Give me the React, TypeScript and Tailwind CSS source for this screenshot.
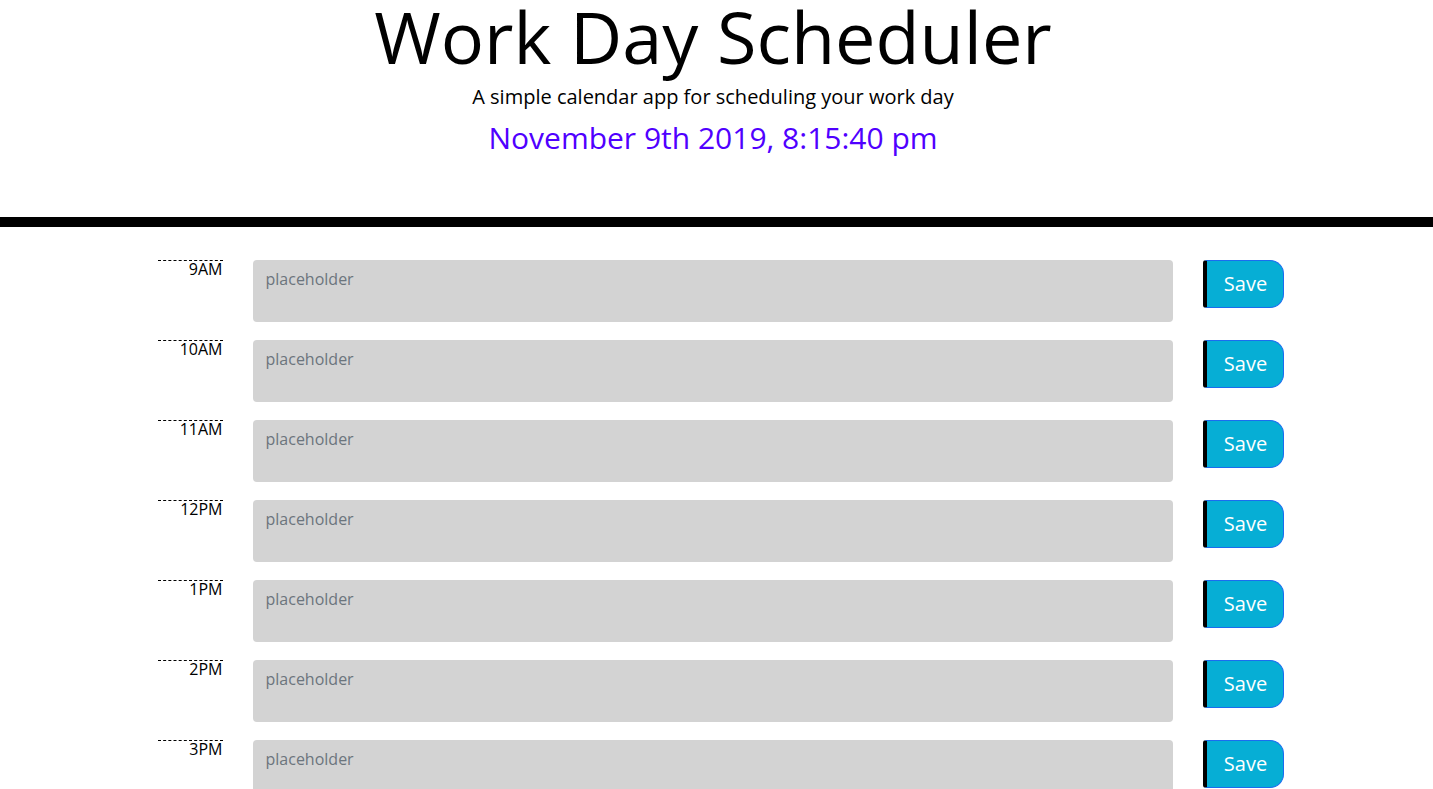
import React from 'react';

const HOURS = ['9AM', '10AM', '11AM', '12PM', '1PM', '2PM', '3PM', '4PM', '5PM'];

const TimeBlock: React.FC<{ hour: string }> = ({ hour }) => (
  <div className="flex items-start mb-[18px]">
    <div className="w-[65px] shrink-0 border-t border-dashed border-black text-right text-base leading-none">
      {hour}
    </div>
    <textarea
      placeholder="placeholder"
      className="ml-[30px] w-[920px] h-[62px] shrink-0 resize-none rounded bg-[#d3d3d3] px-[13px] py-[7px] text-base text-black placeholder:text-[#6c757d] outline-none"
    />
    <button className="ml-[30px] w-[81px] h-[48px] shrink-0 rounded-l-[3px] rounded-r-[14px] border border-[#1a6cf0] border-l-4 border-l-black bg-[#06aed5] pl-[2px] text-white text-[20px]">
      Save
    </button>
  </div>
);

export default function App() {
  return (
    <div className="min-h-screen bg-white text-black font-['Open_Sans',sans-serif]">
      <header className="text-center pr-[7px]">
        <h1 className="text-[72px] leading-none">Work Day Scheduler</h1>
        <p className="mt-[10px] text-[20px] leading-[30px]">A simple calendar app for scheduling your work day</p>
        <p className="mt-[8px] text-[30px] leading-[36px] text-[#5000ff]">November 9th 2019, 8:15:40 pm</p>
      </header>
      <div className="mt-[61px] h-[10px] bg-black" />
      <div className="mx-auto w-[1140px] pl-[11px] pt-[33px]">
        {HOURS.map(h => (
          <TimeBlock key={h} hour={h} />
        ))}
      </div>
    </div>
  );
}
